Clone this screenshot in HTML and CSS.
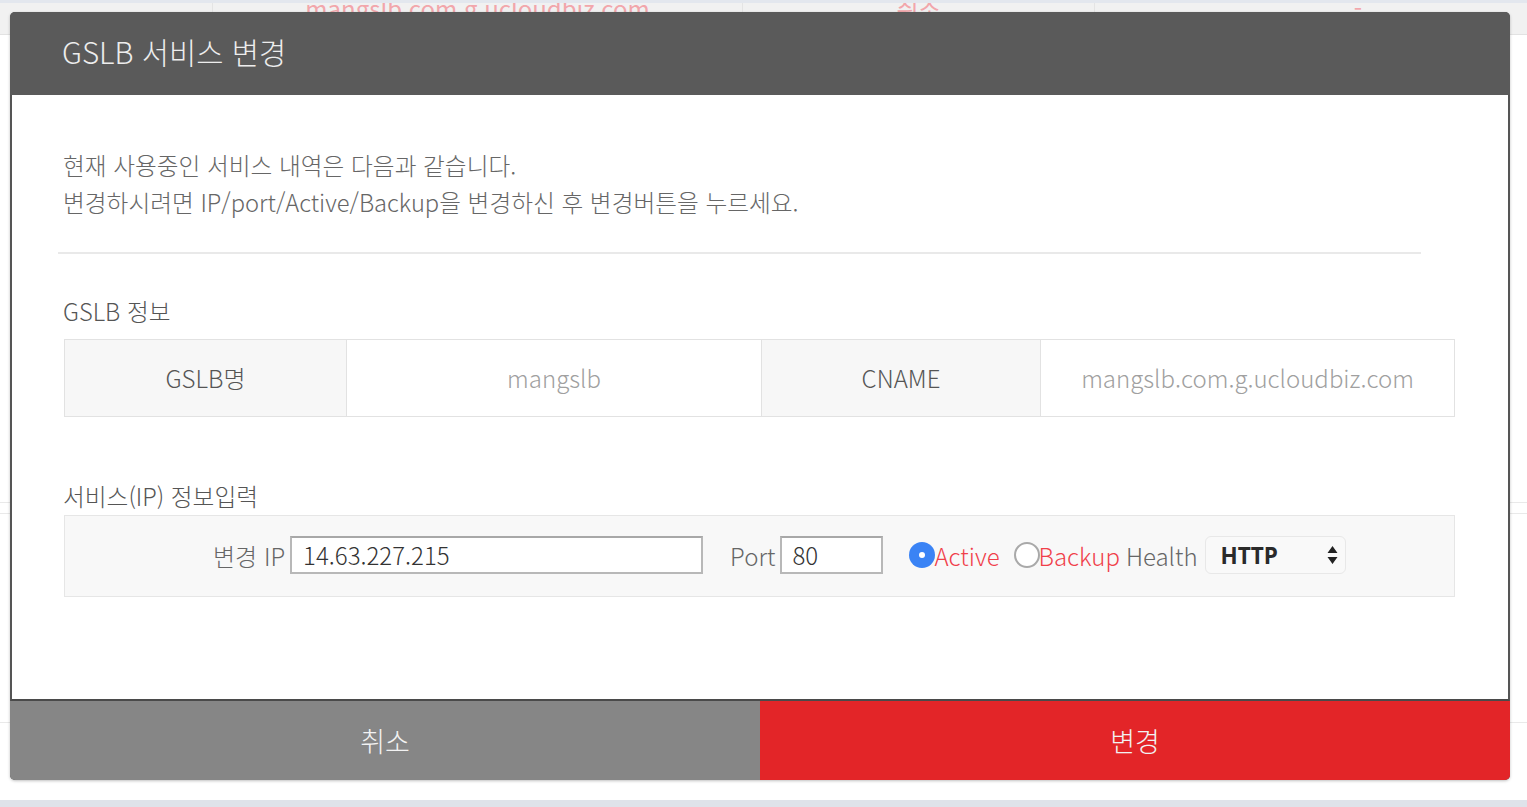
FILE: index.html
```html
<!DOCTYPE html>
<html lang="ko">
<head>
<meta charset="utf-8">
<title>GSLB 서비스 변경</title>
<link rel="stylesheet" href="styles.css">
</head>
<body>
<div class="page">
  <div class="page-top"></div>
  <div class="page-row">
    <div class="cell c1"></div>
    <div class="cell c2"><span class="faded">mangslb.com.g.ucloudbiz.com</span></div>
    <div class="cell c3"><span class="faded">취소</span></div>
    <div class="cell c4"><span class="faded">-</span></div>
  </div>
  <div class="page-space s1"></div>
  <div class="page-line"></div>
  <div class="page-space s2"></div>
  <div class="page-line"></div>
  <div class="page-space s3"></div>
  <div class="page-line"></div>
  <div class="page-space s4"></div>
  <div class="page-bottom"></div>
</div>

<div class="modal">
  <div class="modal-header">GSLB 서비스 변경</div>
  <div class="modal-body">
    <p class="intro">현재 사용중인 서비스 내역은 다음과 같습니다.<br>변경하시려면 IP/port/Active/Backup을 변경하신 후 변경버튼을 누르세요.</p>
    <div class="divider"></div>
    <h3 class="section-title first">GSLB 정보</h3>
    <div class="info-table">
      <div class="th">GSLB명</div>
      <div class="td">mangslb</div>
      <div class="th">CNAME</div>
      <div class="td">mangslb.com.g.ucloudbiz.com</div>
    </div>
    <h3 class="section-title second">서비스(IP) 정보입력</h3>
    <div class="input-box">
      <span class="lbl">변경 IP</span>
      <div class="text-input ip">14.63.227.215</div>
      <span class="lbl port-lbl">Port</span>
      <div class="text-input port">80</div>
      <span class="radio checked"></span><span class="radio-lbl">Active</span>
      <span class="radio backup"></span><span class="radio-lbl">Backup</span>
      <span class="lbl health">Health</span>
      <div class="select">
        <span class="select-val">HTTP</span>
        <svg class="arrows" width="11" height="20" viewBox="0 0 11 20"><path d="M5.5 1 L10.5 8 H0.5 Z M5.5 19 L10.5 12 H0.5 Z" fill="#222"/></svg>
      </div>
    </div>
  </div>
  <div class="modal-footer">
    <div class="btn cancel">취소</div>
    <div class="btn confirm">변경</div>
  </div>
</div>
</body>
</html>
```
FILE: styles.css
```css
html, body {
  margin: 0;
  padding: 0;
  height: 100%;
  overflow: hidden;
  background: #ffffff;
  font-family: "Noto Sans CJK KR", "Noto Sans", sans-serif;
}

.page {
  width: 1527px;
  height: 807px;
  display: flex;
  flex-direction: column;
}
.page-top { height: 3px; background: #e3e7ee; }
.page-row {
  height: 31px;
  background: #f1f1f1;
  border-bottom: 1px solid #e2e2e2;
  display: flex;
  overflow: hidden;
}
.cell {
  flex: none;
  text-align: center;
  border-right: 1px solid #e4e4e4;
  overflow: hidden;
}
.c1 { width: 212px; }
.c2 { width: 529px; }
.c3 { width: 351px; }
.c4 { width: 526px; border-right: none; }
.faded {
  display: block;
  color: #f2a6ab;
  font-size: 24px;
  line-height: 22px;
  margin-top: -6px;
}
.page-space.s1 { height: 467px; }
.page-space.s2 { height: 10px; }
.page-space.s3 { height: 208px; }
.page-space.s4 { flex: 1; }
.page-line { height: 1px; background: #e9e9e9; }
.page-bottom { height: 7px; background: #dfe3ea; }

.modal {
  position: absolute;
  left: 10px;
  top: 12px;
  width: 1500px;
  height: 768px;
  display: flex;
  flex-direction: column;
  border-radius: 5px;
  overflow: hidden;
  box-shadow: 0 1px 3px rgba(0,0,0,0.25);
  background: #555;
}
.modal-header {
  height: 83px;
  flex: none;
  background: #5a5a5a;
  color: #ededed;
  font-size: 29.6px;
  font-weight: 300;
  line-height: 80px;
  padding-left: 52px;
  box-sizing: border-box;
}
.modal-body {
  flex: 1;
  background: #ffffff;
  border-left: 2px solid #555;
  border-right: 2px solid #555;
  border-bottom: 2px solid #4a4a4a;
  padding: 52px 52px 0 51px;
  box-sizing: border-box;
}
.intro {
  margin: 0;
  color: #666;
  font-size: 23.7px;
  font-weight: 300;
  line-height: 37px;
}
.divider {
  margin: 31px 0 0 -5px;
  width: 1363px;
  height: 2px;
  background: #e9e9e9;
}
.section-title {
  margin: 0;
  color: #555;
  font-size: 23.7px;
  font-weight: 300;
  line-height: 30px;
}
.section-title.first { margin-top: 42px; }
.section-title.second { margin-top: 64px; }

.info-table {
  margin: 13px 0 0 1px;
  width: 1391px;
  height: 78px;
  display: grid;
  grid-template-columns: 281px 415px 279px 1fr;
  border: 1px solid #e2e2e2;
  box-sizing: border-box;
}
.th, .td {
  display: flex;
  align-items: center;
  justify-content: center;
  font-size: 24px;
  font-weight: 300;
  padding-bottom: 2px;
}
.th { background: #f7f7f7; color: #555; }
.td { background: #fff; color: #a0a0a0; }
.th + .td, .td + .th { border-left: 1px solid #e2e2e2; }

.input-box {
  margin: 4px 0 0 1px;
  width: 1391px;
  height: 82px;
  box-sizing: border-box;
  border: 1px solid #e6e6e6;
  background: #f8f8f8;
  display: flex;
  align-items: center;
  padding: 0 0 2px 148px;
}
.lbl {
  color: #666;
  font-size: 24px;
  font-weight: 300;
}
.text-input {
  height: 38px;
  box-sizing: border-box;
  border: 2px solid #b8b8b8;
  border-top-color: #a8a8a8;
  background: #fff;
  color: #333;
  font-size: 24px;
  font-weight: 300;
  line-height: 34px;
  padding-left: 11px;
  margin-left: 5px;
  flex: none;
}
.text-input.ip { width: 413px; }
.text-input.port { width: 103px; padding-left: 10px; }
.port-lbl { margin-left: 27px; }
.radio {
  width: 26px;
  height: 26px;
  box-sizing: border-box;
  border-radius: 50%;
  flex: none;
  display: inline-block;
}
.radio.checked {
  margin-left: 26px;
  background: #3a83f5;
  position: relative;
}
.radio.checked::after {
  content: "";
  position: absolute;
  left: 10px;
  top: 10px;
  width: 6px;
  height: 6px;
  border-radius: 50%;
  background: #fff;
}
.radio.backup {
  margin-left: 14px;
  background: #fff;
  border: 2px solid #a9a9a9;
}
.radio-lbl {
  color: #f0404a;
  font-size: 24px;
  font-weight: 300;
  margin-left: -1px;
}
.health { margin-left: 6px; }
.select {
  margin-left: 7px;
  width: 141px;
  height: 38px;
  flex: none;
  box-sizing: border-box;
  border: 1px solid #e8e8e8;
  border-radius: 6px;
  background: #f9f9f9;
  display: flex;
  align-items: center;
  justify-content: space-between;
  padding: 0 7px 0 15px;
}
.select-val {
  color: #2a2a2a;
  font-size: 22.5px;
  font-weight: 700;
  font-family: "Open Sans", "Noto Sans", sans-serif;
}

.modal-footer {
  height: 79px;
  flex: none;
  display: flex;
}
.btn {
  flex: 1;
  display: flex;
  align-items: center;
  justify-content: center;
  color: #f2f2f2;
  font-size: 27px;
  font-weight: 300;
}
.btn.cancel { background: #868686; }
.btn.confirm { background: #e32528; }
```
